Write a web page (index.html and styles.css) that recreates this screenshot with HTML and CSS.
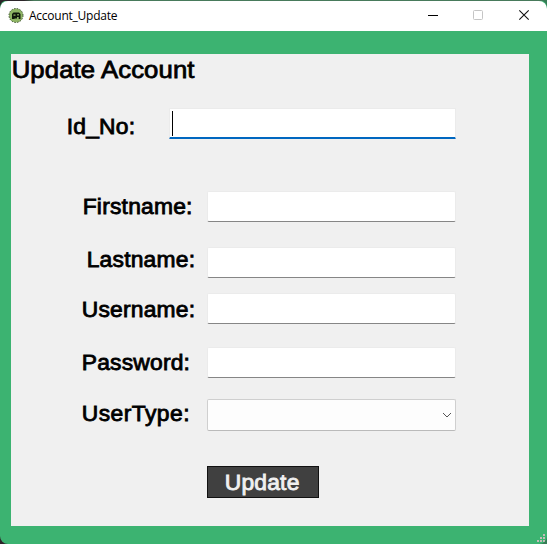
FILE: index.html
```
<!DOCTYPE html>
<html lang="en">
<head>
<meta charset="utf-8">
<title>Account_Update</title>
<link rel="stylesheet" href="styles.css">
</head>
<body>
<div class="window">
  <header class="titlebar">
    <svg class="app-icon" width="16" height="16" viewBox="0 0 16 16">
      <circle cx="8" cy="7.5" r="7" fill="#8fb565"/>
      <circle cx="8" cy="7.5" r="7" fill="none" stroke="#35492a" stroke-width="1" stroke-dasharray="1.4 1.4"/>
      <path d="M4 11V6L5.5 4.5H11L12.5 6v5h-1.8V9H9v1.5H6.5V11z" fill="#10170c"/>
      <path d="M5.5 6.5h2v1.2h-2zM9.3 6h1.5v1.5H9.3z" fill="#8fb565"/>
    </svg>
    <span class="caption">Account_Update</span>
    <svg class="controls" width="138" height="30" viewBox="0 0 138 30" fill="none">
      <path d="M19 14.5h10" stroke="#000"/>
      <rect x="64.5" y="9.5" width="9" height="9" rx="1" stroke="#c5c5c5"/>
      <path d="M110.3 9.3l9.4 9.4M119.7 9.3l-9.4 9.4" stroke="#111" stroke-width="1.1"/>
    </svg>
  </header>
  <main class="panel">
    <h1>Update Account</h1>
    <form class="form">
      <div class="row id-row"><label>Id_No:</label><div class="input focused"><span class="caret"></span></div></div>
      <div class="row first-row"><label>Firstname:</label><div class="input"></div></div>
      <div class="row last-row"><label>Lastname:</label><div class="input"></div></div>
      <div class="row user-row"><label>Username:</label><div class="input"></div></div>
      <div class="row pass-row"><label>Password:</label><div class="input"></div></div>
      <div class="row type-row"><label>UserType:</label><div class="select">
        <svg width="10" height="6" viewBox="0 0 10 6" fill="none"><path d="M1 1l4 4 4-4" stroke="#555"/></svg>
      </div></div>
      <button class="update" type="button"><span>Update</span></button>
    </form>
  </main>
  <svg class="grip" width="10" height="9" viewBox="0 0 10 9" fill="#c3bcb9">
    <path d="M6 0h2v2H6zM3 3h2v2H3zM6 3h2v2H6zM0 6h2v2H0zM3 6h2v2H3zM6 6h2v2H6z"/>
  </svg>
</div>
</body>
</html>
```
FILE: styles.css
```
* { box-sizing: border-box; }
body {
  margin: 0;
  width: 547px;
  height: 544px;
  overflow: hidden;
  background: linear-gradient(90deg, #2c2529 0, #2c2529 24px, #487a5b 34px, #487a5b 530px, #347c55 100%);
  font-family: "Liberation Sans", Arial, sans-serif;
  color: #000;
}
.window {
  position: relative;
  height: 544px;
  padding-top: 1px;
  border-radius: 8px;
  overflow: hidden;
  background: #3cb371;
  background-image: linear-gradient(90deg, #2c2529 24px, #487a5b 34px);
  background-size: 100% 1px;
  background-repeat: no-repeat;
}
.titlebar {
  display: flex;
  align-items: center;
  height: 30px;
  padding-left: 8px;
  background: #fff;
  border-radius: 8px 8px 0 0;
}
.caption {
  margin-left: 5px;
  font: 12px/16px "Open Sans", "Noto Sans", sans-serif;
  letter-spacing: -0.25px;
}
.controls { margin-left: auto; }
.panel {
  width: 518px;
  height: 472px;
  margin: 23px 0 0 11px;
  background: #f0f0f0;
}
h1, label, .update span {
  transform: translateX(0.7px) scaleX(1.07);
  transform-origin: 0 50%;
  letter-spacing: 0.2px;
  -webkit-text-stroke: 0.8px currentColor;
  white-space: nowrap;
}
h1 {
  width: 200px;
  margin: 0;
  height: 54px;
  font-size: 24px;
  line-height: 31px;
  font-weight: 400;
  letter-spacing: 0.1px;
}
.form { display: flex; flex-direction: column; align-items: flex-start; }
.row {
  display: flex;
  justify-content: space-between;
  width: 445px;
  height: 31px;
}
label {
  font-size: 21.33px;
  line-height: 31px;
}
.input {
  width: 249px;
  height: 31px;
  background: #fff;
  border: 1px solid #ebebeb;
  border-bottom-color: #868686;
  border-radius: 2px;
}
.input.focused { width: 287px; padding: 2px; border-bottom: 2px solid #0067c0; border-radius: 1px; }
.caret { display: block; width: 1px; height: 25px; background: #000; }
.id-row { padding-left: 55px; }
.id-row label { margin-top: 4px; }
.first-row { margin-top: 52px; padding-left: 71px; }
.first-row label { margin-top: 1px; }
.last-row { margin-top: 25px; padding-left: 75px; }
.last-row label { margin-top: -2px; }
.user-row { margin-top: 15px; padding-left: 70px; }
.user-row label { margin-top: 2px; }
.pass-row { margin-top: 23px; padding-left: 70px; }
.pass-row label { margin-top: 1px; }
.type-row { margin-top: 21px; height: 32px; padding-left: 70px; }
.type-row label { letter-spacing: 0.45px; }
.select {
  display: flex;
  align-items: center;
  justify-content: flex-end;
  width: 249px;
  height: 32px;
  padding-right: 3px;
  background: #fdfdfd;
  border: 1px solid #cfcfcf;
  border-bottom-color: #bababa;
  border-radius: 2px;
}
.update {
  width: 112px;
  height: 32px;
  margin: 35px 0 0 196px;
  padding: 1px 0 0 16px;
  background: #404040;
  border: 1px solid #111;
  color: #f0f0f0;
  font: 21.33px/30px "Liberation Sans", Arial, sans-serif;
  text-align: left;
}
.update span { display: block; }
.grip { position: absolute; right: 0; bottom: 1px; }
```
